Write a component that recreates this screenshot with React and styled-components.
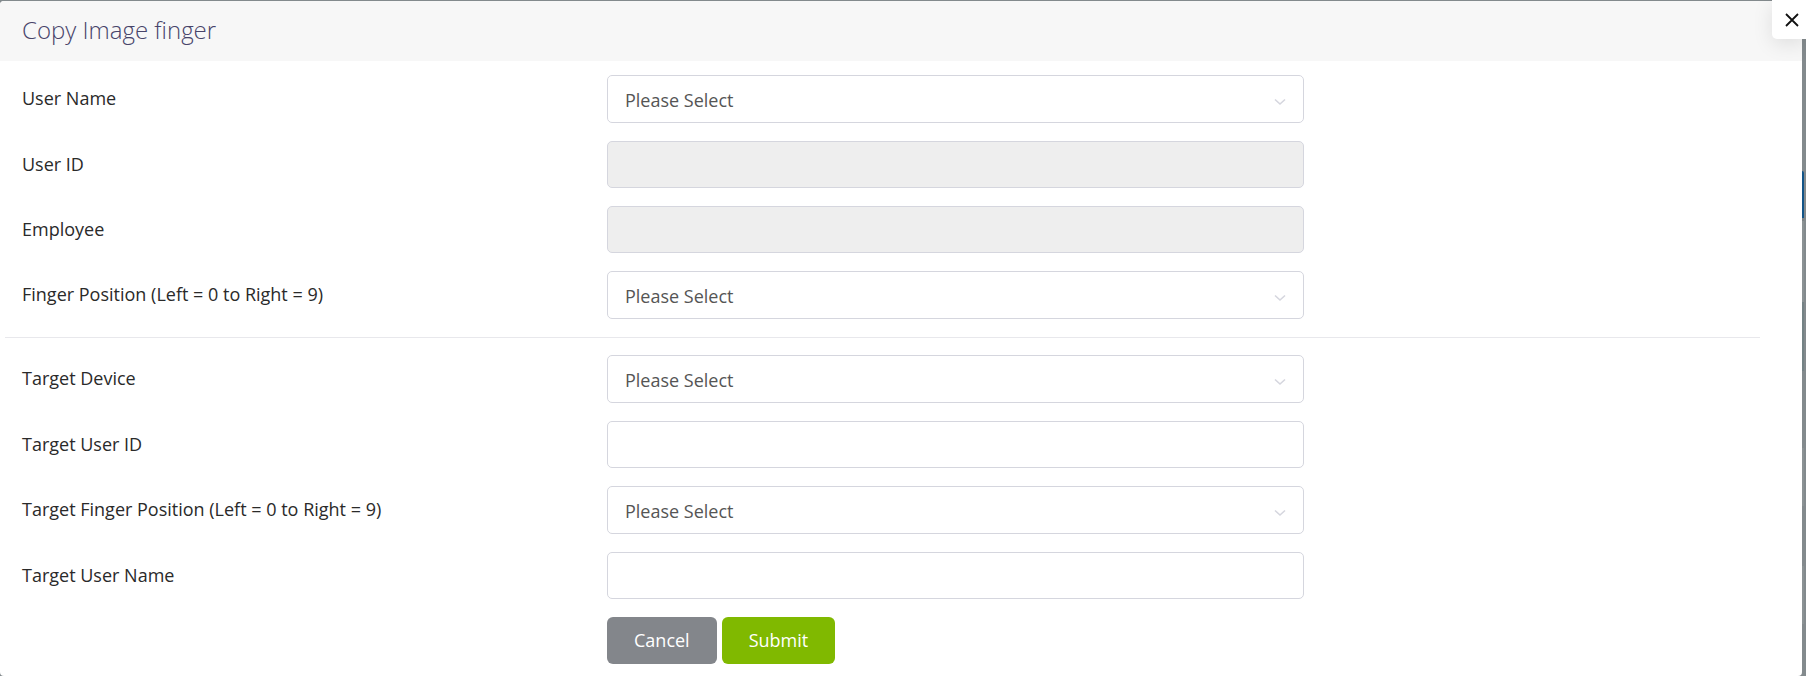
import React from "react";
import styled, { createGlobalStyle } from "styled-components";

const GlobalStyle = createGlobalStyle`
  * { box-sizing: border-box; }
  body {
    margin: 0;
    background: #838a8d;
    color: #2a2a2a;
    font: 400 18px/24px "Open Sans", "Noto Sans", sans-serif;
  }
`;

const Page = styled.div`
  position: relative;
  display: flex;
  min-height: 100vh;
  padding-top: 1px;
`;

const Dialog = styled.main`
  flex: 1;
  background: #fff;
  border-radius: 4px;
  overflow: hidden;
`;

const Header = styled.header`
  padding: 13px 22px 15px;
  background: #f7f7f7;
`;

const Title = styled.h1`
  margin: 0;
  color: #48446a;
  font-size: 24px;
  line-height: 32px;
  font-weight: 300;
`;

const Form = styled.form`
  padding: 14px 42px 12px 5px;
`;

const Group = styled.div`
  display: flex;
  flex-direction: column;
  gap: 18px;
`;

const Row = styled.div`
  display: grid;
  grid-template-columns: 4fr 5fr 3fr;
`;

const Label = styled.label`
  padding: 11px 17px 0;
`;

const Cell = styled.div`
  grid-column: 2;
  padding: 0 17px;
`;

const TextInput = styled.input`
  display: block;
  width: 100%;
  height: 47px;
  padding: 0 17px;
  border: 1px solid #d5d6de;
  border-radius: 5px;
  background: #fff;
  color: #555;
  font: inherit;
  &:disabled { background: #eee; }
`;

const SelectBox = styled.div`
  display: grid;
  align-items: center;
`;

const Select = styled.select`
  grid-area: 1 / 1;
  appearance: none;
  width: 100%;
  height: 48px;
  padding: 2px 44px 0 17px;
  border: 1px solid #d5d6de;
  border-radius: 5px;
  background: #fff;
  color: #555;
  font: inherit;
`;

const Chevron = styled.svg`
  grid-area: 1 / 1;
  justify-self: end;
  margin: 5px 18px 0 0;
  pointer-events: none;
`;

const Divider = styled.hr`
  height: 1px;
  margin: 18px 0 17px;
  border: 0;
  background: #e8e8ec;
`;

const Actions = styled(Cell)`
  display: flex;
  gap: 5px;
`;

const Button = styled.button`
  height: 47px;
  padding: 0 27px 2px;
  border: 0;
  border-radius: 6px;
  background: ${(p) => (p.$primary ? "#80b900" : "#83868b")};
  color: #fff;
  font: inherit;
  cursor: pointer;
`;

const CloseButton = styled.button`
  position: absolute;
  top: 0;
  right: 0;
  display: flex;
  align-items: center;
  justify-content: center;
  width: 34px;
  height: 39px;
  padding: 0 0 0 6px;
  border: 0;
  border-radius: 0 0 0 5px;
  background: #fff;
  box-shadow: 0 5px 20px rgba(0, 0, 0, 0.1);
  cursor: pointer;
`;

const Edge = styled.aside`
  width: 4px;
  padding: 170px 2px 0 0;
`;

const EdgeMark = styled.div`
  height: ${(p) => p.$height}px;
  border-radius: ${(p) => (p.$round ? "0 4px 0 0" : "0")};
  background: ${(p) => p.$color};
`;

const backdropMarks = [
  { height: 47, color: "#125488", round: true },
  { height: 3, color: "#7b8285" },
  { height: 81, color: "#8b9294" },
  { height: 69, color: "#748285" },
  { height: 77, color: "#838a8d" },
  { height: 58, color: "#8b9294" },
  { height: 60, color: "#838a8d" },
  { height: 58, color: "#8b9294" },
];

function SelectField({ id, label }) {
  return (
    <Row>
      <Label htmlFor={id}>{label}</Label>
      <Cell>
        <SelectBox>
          <Select id={id}>
            <option>Please Select</option>
          </Select>
          <Chevron width="12" height="8" viewBox="0 0 12 8" fill="none" stroke="#d5d6de" strokeWidth="1.6">
            <path d="M1 1.5 6 6l5-4.5" />
          </Chevron>
        </SelectBox>
      </Cell>
    </Row>
  );
}

function TextField({ id, label, disabled }) {
  return (
    <Row>
      <Label htmlFor={id}>{label}</Label>
      <Cell>
        <TextInput id={id} type="text" disabled={disabled} />
      </Cell>
    </Row>
  );
}

export default function App() {
  return (
    <Page>
      <GlobalStyle />
      <Dialog>
        <Header>
          <Title>Copy Image finger</Title>
        </Header>
        <Form onSubmit={(e) => e.preventDefault()}>
          <Group>
            <SelectField id="user-name" label="User Name" />
            <TextField id="user-id" label="User ID" disabled />
            <TextField id="employee" label="Employee" disabled />
            <SelectField id="finger" label="Finger Position (Left = 0 to Right = 9)" />
          </Group>
          <Divider />
          <Group>
            <SelectField id="target-device" label="Target Device" />
            <TextField id="target-user-id" label="Target User ID" />
            <SelectField id="target-finger" label="Target Finger Position (Left = 0 to Right = 9)" />
            <TextField id="target-user-name" label="Target User Name" />
            <Row>
              <Actions>
                <Button type="button">Cancel</Button>
                <Button type="submit" $primary>Submit</Button>
              </Actions>
            </Row>
          </Group>
        </Form>
      </Dialog>
      <Edge aria-hidden="true">
        {backdropMarks.map((m, i) => (
          <EdgeMark key={i} $height={m.height} $color={m.color} $round={m.round} />
        ))}
      </Edge>
      <CloseButton type="button" aria-label="Close">
        <svg width="14" height="14" viewBox="0 0 14 14" stroke="#111" strokeWidth="1.8" fill="none">
          <path d="m1 1 12 12M13 1 1 13" />
        </svg>
      </CloseButton>
    </Page>
  );
}
